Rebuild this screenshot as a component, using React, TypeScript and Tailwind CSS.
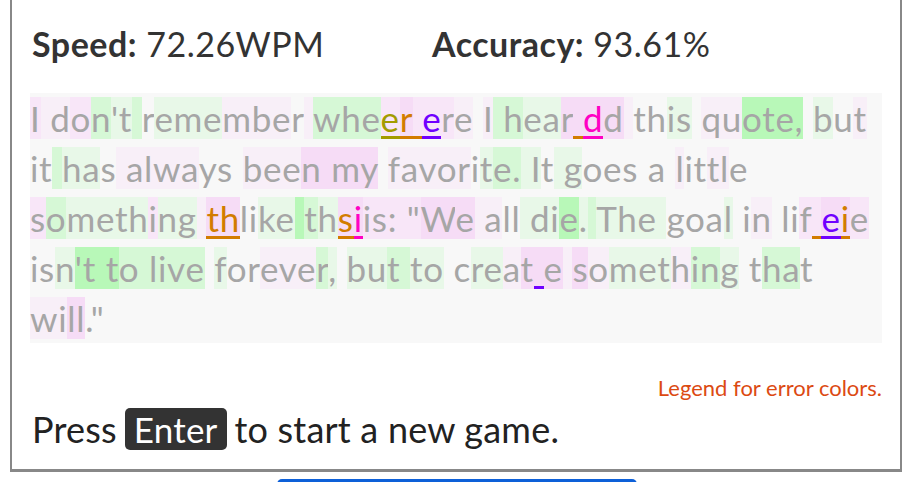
const BG: Record<string, string> = {
  ".": "",
  q: "bg-[#f8eff8]",
  p: "bg-[#f8e6f8]",
  P: "bg-[#f6dcf6]",
  g: "bg-[#e8f8e8]",
  G: "bg-[#d6f8d6]",
  B: "bg-[#b8f8b8]",
};

const ERR: Record<string, string> = {
  o: "text-[#a39c00] shadow-[inset_0_-3px_0_#a39c00]",
  r: "text-[#d27c00] shadow-[inset_0_-3px_0_#d27c00]",
  v: "text-[#7000ff] shadow-[inset_0_-3px_0_#7000ff]",
  m: "text-[#ff00c4] shadow-[inset_0_-3px_0_#ff00c4]",
};

type Line = { text: string; bg: string; err: Record<number, string> };

const lines: Line[] = [
  {
    text: "I don't remember wheer ere I hear dd this quote, but",
    bg: "pqqpGggG" + ".gggqqq.q" + "GGGpPpppq" + ".qGGggPPPPq" + "..gg.qqBBBB" + ".g.q",
    err: { 20: "o", 21: "r", 22: "r", 23: "v", 33: "r", 34: "m" },
  },
  {
    text: "it has always been my favorite. It goes a little",
    bg: "..Ggg.qqqqq...qqqPPPP.qqqqq.gGGgg.gg....." + ".q..qq",
    err: {},
  },
  {
    text: 'something thlike thsiis: "We all die. The goal in lif eie',
    bg: "pGggggpgg" + "q" + "PP..gg" + "B" + "GgPPppp" + "p" + "pPP" + "q" + "q.." + "g" + "ggBg" + "G" + "ggg" + "g" + "...g" + "." + ".q" + "." + "..p" + "p" + "PPp",
    err: { 10: "r", 11: "r", 19: "r", 20: "m", 53: "r", 54: "v", 55: "r" },
  },
  {
    text: "isn't to live forever, but to creat e something that",
    bg: "..gBB" + "B" + "BG" + "G" + "GGGG" + "." + "g..qqqGg" + "." + "ggG" + "G" + "gg" + "." + ".ggqP" + "P" + "P" + "q" + "PqgggqGGg" + "." + ".GG.",
    err: { 35: "v" },
  },
  {
    text: 'will."',
    bg: "qqPP..",
    err: {},
  },
];

function QuoteLine({ line }: { line: Line }) {
  return (
    <div className="h-[50px] leading-[50px] whitespace-nowrap">
      {line.text.split("").map((ch, i) => {
        const e = line.err[i];
        return (
          <span key={i} className={`whitespace-pre ${BG[line.bg[i] ?? "."] ?? ""} ${e ? ERR[e] : ""}`}>
            {ch}
          </span>
        );
      })}
    </div>
  );
}

export default function App() {
  return (
    <div className="font-['Lato',sans-serif] bg-white min-h-screen">
      <div className="ml-[10px] mr-[11px] border-x-2 border-b-[3px] border-[#888] px-[18px] pt-[23px] pb-[18px]">
        <div className="flex h-[40px] items-center text-[34px] tracking-[0.5px] text-[#333] pl-[2px]">
          <div className="w-[400px]">
            <span className="font-bold">Speed:</span> 72.26WPM
          </div>
          <div>
            <span className="font-bold">Accuracy:</span> 93.61%
          </div>
        </div>

        <div className="mt-[30px] bg-[#f8f8f8] text-[35px] tracking-[0.7px] text-[#a6a6a6]">
          {lines.map((l, i) => (
            <QuoteLine key={i} line={l} />
          ))}
        </div>

        <div className="mt-[33px] h-[24px] leading-[24px] text-right text-[22px] text-[#dc4a12]">
          Legend for error colors.
        </div>

        <div className="mt-[7px] flex h-[44px] items-center text-[36px] tracking-[0.2px] text-[#222] pl-[2px]">
          Press
          <kbd className="mx-[8px] rounded-[5px] bg-[#333] px-[9px] h-[42px] leading-[42px] text-white text-[35px] font-['Lato',sans-serif]">
            Enter
          </kbd>
          to start a new game.
        </div>
      </div>
      <div className="mx-auto mt-[7px] h-[40px] w-[360px] rounded-t-[5px] bg-[#0d60d8]" />
    </div>
  );
}
